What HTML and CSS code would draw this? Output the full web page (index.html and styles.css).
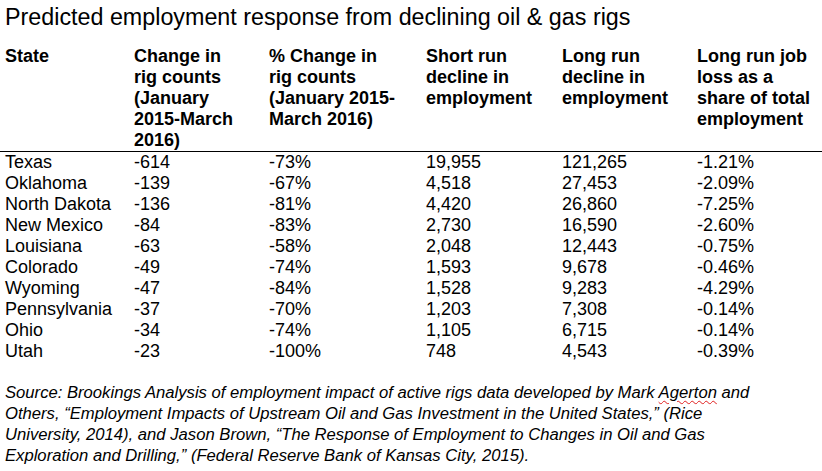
FILE: index.html
```html
<!DOCTYPE html>
<html>
<head>
<meta charset="utf-8">
<link rel="stylesheet" href="styles.css">
</head>
<body>
<div class="page">
  <h1 class="title">Predicted employment response from declining oil &amp; gas rigs</h1>
  <table class="data">
    <colgroup>
      <col class="c1"><col class="c2"><col class="c3"><col class="c4"><col class="c5"><col class="c6">
    </colgroup>
    <thead>
      <tr>
        <th>State</th>
        <th>Change in<br>rig counts<br>(January<br>2015-March<br>2016)</th>
        <th>% Change in<br>rig counts<br>(January 2015-<br>March 2016)</th>
        <th>Short run<br>decline in<br>employment</th>
        <th>Long run<br>decline in<br>employment</th>
        <th>Long run job<br>loss as a<br>share of total<br>employment</th>
      </tr>
    </thead>
    <tbody>
      <tr><td>Texas</td><td>-614</td><td>-73%</td><td>19,955</td><td>121,265</td><td>-1.21%</td></tr>
      <tr><td>Oklahoma</td><td>-139</td><td>-67%</td><td>4,518</td><td>27,453</td><td>-2.09%</td></tr>
      <tr><td>North Dakota</td><td>-136</td><td>-81%</td><td>4,420</td><td>26,860</td><td>-7.25%</td></tr>
      <tr><td>New Mexico</td><td>-84</td><td>-83%</td><td>2,730</td><td>16,590</td><td>-2.60%</td></tr>
      <tr><td>Louisiana</td><td>-63</td><td>-58%</td><td>2,048</td><td>12,443</td><td>-0.75%</td></tr>
      <tr><td>Colorado</td><td>-49</td><td>-74%</td><td>1,593</td><td>9,678</td><td>-0.46%</td></tr>
      <tr><td>Wyoming</td><td>-47</td><td>-84%</td><td>1,528</td><td>9,283</td><td>-4.29%</td></tr>
      <tr><td>Pennsylvania</td><td>-37</td><td>-70%</td><td>1,203</td><td>7,308</td><td>-0.14%</td></tr>
      <tr><td>Ohio</td><td>-34</td><td>-74%</td><td>1,105</td><td>6,715</td><td>-0.14%</td></tr>
      <tr><td>Utah</td><td>-23</td><td>-100%</td><td>748</td><td>4,543</td><td>-0.39%</td></tr>
    </tbody>
  </table>
  <p class="source">Source: Brookings Analysis of employment impact of active rigs data developed by Mark <span class="spell">Agerton</span> and<br>Others, “Employment Impacts of Upstream Oil and Gas Investment in the United States,” (Rice<br>University, 2014), and Jason Brown, “The Response of Employment to Changes in Oil and Gas<br>Exploration and Drilling,” (Federal Reserve Bank of Kansas City, 2015).</p>
</div>
</body>
</html>
```

FILE: styles.css
```css
html, body {
  margin: 0;
  padding: 0;
  background: #fff;
}
.page {
  width: 822px;
  height: 471px;
  overflow: hidden;
  font-family: "Liberation Sans", Arial, sans-serif;
  color: #000;
}
.title {
  margin: 0;
  padding: 3px 0 0 5px;
  font-size: 23.3px;
  line-height: 28px;
  font-weight: normal;
  height: 42px;
  box-sizing: border-box;
  white-space: nowrap;
}
.data {
  width: 822px;
  border-collapse: collapse;
  table-layout: fixed;
  margin-top: 3.5px;
  font-size: 18px;
  line-height: 21px;
}
.c1 { width: 134px; }
.c2 { width: 135px; }
.c3 { width: 157px; }
.c4 { width: 136px; }
.c5 { width: 135px; }
.c6 { width: 125px; }
.data th, .data td {
  padding: 0;
  text-align: left;
  vertical-align: top;
  white-space: nowrap;
}
.data th:first-child, .data td:first-child {
  padding-left: 5px;
}
.data th {
  font-weight: bold;
}
.data thead tr {
  border-bottom: 1px solid #000;
}
.source {
  margin: 20px 0 0;
  padding-left: 5px;
  font-style: italic;
  font-size: 16.65px;
  line-height: 21px;
  white-space: nowrap;
}
.spell {
  text-decoration: underline wavy #e02020;
  text-decoration-thickness: 1px;
  text-underline-offset: 2px;
}
```
